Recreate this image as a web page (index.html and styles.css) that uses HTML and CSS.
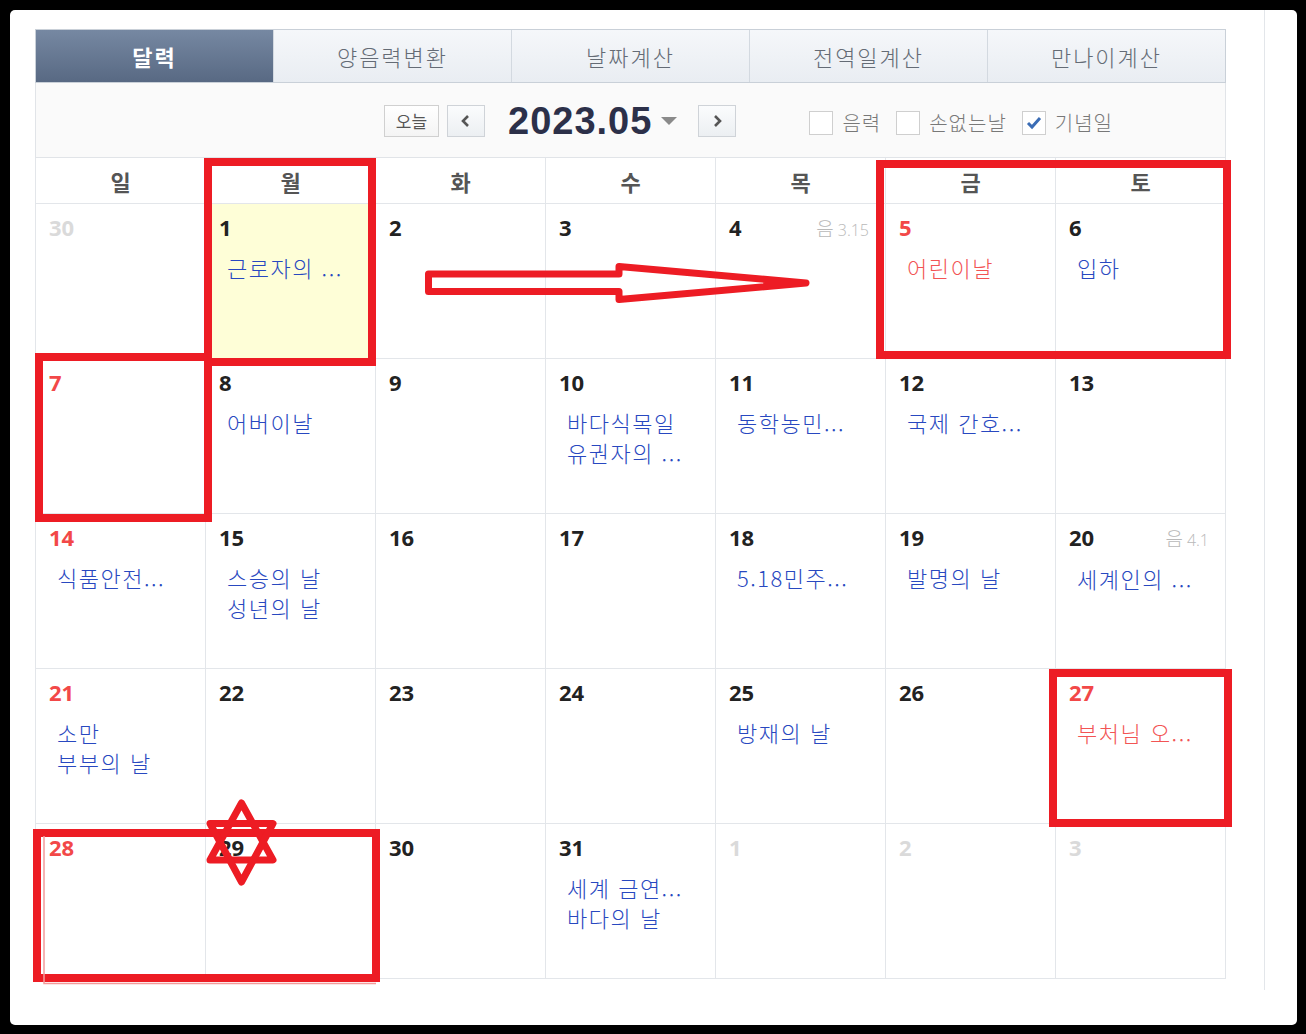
FILE: index.html
```html
<!DOCTYPE html>
<html lang="ko">
<head>
<meta charset="utf-8">
<title>달력</title>
<link rel="stylesheet" href="styles.css">
</head>
<body>
<div class="paper">
  <div class="page">
    <div class="cal">
      <div class="tabs">
        <div class="tab active">달력</div>
        <div class="tab">양음력변환</div>
        <div class="tab">날짜계산</div>
        <div class="tab">전역일계산</div>
        <div class="tab">만나이계산</div>
      </div>
      <div class="toolbar">
        <div class="btn-today">오늘</div>
        <div class="nav-btn prev"><svg width="12" height="14" viewBox="0 0 12 14"><polyline points="8,2 3,7 8,12" fill="none" stroke="#555" stroke-width="2.6"/></svg></div>
        <div class="title">2023.05</div>
        <div class="caret"></div>
        <div class="nav-btn next"><svg width="12" height="14" viewBox="0 0 12 14"><polyline points="4,2 9,7 4,12" fill="none" stroke="#555" stroke-width="2.6"/></svg></div>
        <div class="checks">
          <span class="cb"></span><span class="cb-label">음력</span>
          <span class="cb gap"></span><span class="cb-label">손없는날</span>
          <span class="cb gap checked"><svg width="16" height="14" viewBox="0 0 16 14"><polyline points="2,7 6,11 14,2" fill="none" stroke="#3a6cb5" stroke-width="3"/></svg></span><span class="cb-label">기념일</span>
        </div>
      </div>
      <div class="grid">
        <div class="dow">일</div><div class="dow">월</div><div class="dow">화</div><div class="dow">수</div><div class="dow">목</div><div class="dow">금</div><div class="dow">토</div>

        <div class="cell"><div class="top"><span class="num other">30</span></div></div>
        <div class="cell today"><div class="top"><span class="num">1</span></div><div class="evs"><div class="ev">근로자의 ...</div></div></div>
        <div class="cell"><div class="top"><span class="num">2</span></div></div>
        <div class="cell"><div class="top"><span class="num">3</span></div></div>
        <div class="cell"><div class="top"><span class="num">4</span><span class="lunar">음<span class="ld">3.15</span></span></div></div>
        <div class="cell"><div class="top"><span class="num red">5</span></div><div class="evs"><div class="ev red">어린이날</div></div></div>
        <div class="cell"><div class="top"><span class="num">6</span></div><div class="evs"><div class="ev">입하</div></div></div>

        <div class="cell"><div class="top"><span class="num red">7</span></div></div>
        <div class="cell"><div class="top"><span class="num">8</span></div><div class="evs"><div class="ev">어버이날</div></div></div>
        <div class="cell"><div class="top"><span class="num">9</span></div></div>
        <div class="cell"><div class="top"><span class="num">10</span></div><div class="evs"><div class="ev">바다식목일</div><div class="ev">유권자의 ...</div></div></div>
        <div class="cell"><div class="top"><span class="num">11</span></div><div class="evs"><div class="ev">동학농민...</div></div></div>
        <div class="cell"><div class="top"><span class="num">12</span></div><div class="evs"><div class="ev">국제 간호...</div></div></div>
        <div class="cell"><div class="top"><span class="num">13</span></div></div>

        <div class="cell"><div class="top"><span class="num red">14</span></div><div class="evs"><div class="ev">식품안전...</div></div></div>
        <div class="cell"><div class="top"><span class="num">15</span></div><div class="evs"><div class="ev">스승의 날</div><div class="ev">성년의 날</div></div></div>
        <div class="cell"><div class="top"><span class="num">16</span></div></div>
        <div class="cell"><div class="top"><span class="num">17</span></div></div>
        <div class="cell"><div class="top"><span class="num">18</span></div><div class="evs"><div class="ev">5.18민주...</div></div></div>
        <div class="cell"><div class="top"><span class="num">19</span></div><div class="evs"><div class="ev">발명의 날</div></div></div>
        <div class="cell"><div class="top"><span class="num">20</span><span class="lunar">음<span class="ld">4.1</span></span></div><div class="evs"><div class="ev">세계인의 ...</div></div></div>

        <div class="cell"><div class="top"><span class="num red">21</span></div><div class="evs"><div class="ev">소만</div><div class="ev">부부의 날</div></div></div>
        <div class="cell"><div class="top"><span class="num">22</span></div></div>
        <div class="cell"><div class="top"><span class="num">23</span></div></div>
        <div class="cell"><div class="top"><span class="num">24</span></div></div>
        <div class="cell"><div class="top"><span class="num">25</span></div><div class="evs"><div class="ev">방재의 날</div></div></div>
        <div class="cell"><div class="top"><span class="num">26</span></div></div>
        <div class="cell"><div class="top"><span class="num red">27</span></div><div class="evs"><div class="ev red">부처님 오...</div></div></div>

        <div class="cell"><div class="top"><span class="num red">28</span></div></div>
        <div class="cell"><div class="top"><span class="num">29</span></div></div>
        <div class="cell"><div class="top"><span class="num">30</span></div></div>
        <div class="cell"><div class="top"><span class="num">31</span></div><div class="evs"><div class="ev">세계 금연...</div><div class="ev">바다의 날</div></div></div>
        <div class="cell"><div class="top"><span class="num other">1</span></div></div>
        <div class="cell"><div class="top"><span class="num other">2</span></div></div>
        <div class="cell"><div class="top"><span class="num other">3</span></div></div>
      </div>
    </div>
  </div>
</div>
<svg class="marks" width="1306" height="1034" viewBox="0 0 1306 1034">
  <g fill="none" stroke="#ed1c24" stroke-width="8">
    <rect x="208" y="162" width="164" height="200"/>
    <rect x="39" y="357" width="169" height="161"/>
    <rect x="880" y="164" width="347" height="191"/>
    <rect x="1053" y="673" width="175" height="150"/>
    <rect x="37" y="833" width="339" height="145"/>
  </g>
  <polyline points="44,836 44,983.5 376,983.5" fill="none" stroke="#f49a9a" stroke-width="1.5"/>
  <g fill="none" stroke="#ed1c24" stroke-width="7" stroke-linejoin="round">
    <polygon points="428.5,274 619,274 619,266.5 806,283 619,299.5 619,291.5 428.5,291.5"/>
    <polygon points="241.5,803 273,860 210,860"/>
    <polygon points="241.5,882 273,823.5 210,823.5"/>
  </g>
</svg>
</body>
</html>
```

FILE: styles.css
```css
* { box-sizing: border-box; }
html, body { margin: 0; padding: 0; }
body {
  background: #000;
  width: 1306px;
  height: 1034px;
  position: relative;
  overflow: hidden;
  padding: 10px;
  font-family: "Noto Sans CJK KR", "Noto Sans", sans-serif;
}
.paper {
  width: 1287px;
  height: 1015px;
  background: #fff;
  border-radius: 5px;
}
.page {
  width: 1255px;
  height: 980px;
  border-right: 1px solid #e3e6ea;
  padding: 19px 0 0 25px;
}
.cal { width: 1191px; }

.tabs {
  display: flex;
  height: 54px;
  border: 1px solid #c9d0d8;
}
.tab {
  flex: 1;
  display: flex;
  align-items: center;
  justify-content: center;
  font-size: 22px;
  font-weight: 300;
  letter-spacing: 2px;
  line-height: 30px;
  color: #646b75;
  background: linear-gradient(#f5f7fa, #e9edf2);
  border-left: 1px solid #d3d9e0;
}
.tab:first-child { border-left: none; }
.tab.active {
  background: linear-gradient(#7688a2, #586983);
  color: #fff;
  font-weight: 700;
}

.toolbar {
  height: 75px;
  display: flex;
  align-items: center;
  background: #fafafa;
  border: 1px solid #e1e4e8;
  border-top: none;
  padding-left: 348px;
}
.btn-today {
  width: 55px;
  height: 32px;
  margin-top: 2px;
  border: 1px solid #d0d0d0;
  background: linear-gradient(#fff, #f4f4f4);
  font-size: 17px;
  line-height: 24px;
  color: #555;
  display: flex;
  align-items: center;
  justify-content: center;
}
.nav-btn {
  width: 38px;
  height: 32px;
  margin-top: 2px;
  border: 1px solid #cfd3d8;
  background: linear-gradient(#fbfcfd, #eceff2);
  display: flex;
  align-items: center;
  justify-content: center;
}
.nav-btn.prev { margin-left: 8px; }
.nav-btn.next { margin-left: 21px; }
.title {
  margin-left: 23px;
  margin-top: 2px;
  font-family: "Liberation Sans", Arial, sans-serif;
  font-weight: 700;
  font-size: 38px;
  letter-spacing: 1px;
  line-height: 44px;
  color: #2c3049;
}
.caret {
  margin-left: 9px;
  margin-top: 2px;
  width: 0;
  height: 0;
  border-left: 8px solid transparent;
  border-right: 8px solid transparent;
  border-top: 8px solid #8a8a8a;
}
.checks {
  margin-left: 73px;
  margin-top: 6px;
  display: flex;
  align-items: center;
}
.cb {
  width: 24px;
  height: 24px;
  border: 1px solid #cfcfcf;
  background: #fff;
  display: flex;
  align-items: center;
  justify-content: center;
}
.cb.gap { margin-left: 15px; }
.cb-label {
  margin-left: 9px;
  font-size: 20px;
  font-weight: 300;
  letter-spacing: 1px;
  line-height: 26px;
  color: #787878;
}

.grid {
  display: grid;
  grid-template-columns: repeat(7, 170px);
  border-left: 1px solid #e3e6ea;
  width: 1191px;
}
.dow {
  height: 46px;
  border-right: 1px solid #e3e6ea;
  border-bottom: 1px solid #e3e6ea;
  display: flex;
  align-items: center;
  justify-content: center;
  font-weight: 700;
  font-size: 22px;
  color: #555;
}
.cell {
  height: 155px;
  border-right: 1px solid #e3e6ea;
  border-bottom: 1px solid #e3e6ea;
  padding: 10px 16px 0 13px;
}
.cell.today { background: #fefed7; }
.top {
  display: flex;
  justify-content: space-between;
  align-items: baseline;
}
.num {
  font-family: "Open Sans", "Liberation Sans", sans-serif;
  font-weight: 700;
  font-size: 22px;
  line-height: 26px;
  color: #222;
}
.num.red { color: #f24848; }
.num.other { color: #dadada; }
.lunar {
  font-size: 19px;
  font-weight: 300;
  color: #b9b9b9;
}
.ld {
  margin-left: 4px;
  font-family: "Open Sans", sans-serif;
  font-size: 16px;
}
.evs { margin-top: 12px; padding-left: 8px; }
.ev {
  font-size: 22px;
  font-weight: 300;
  letter-spacing: 1.5px;
  line-height: 30px;
  color: #2848c0;
  white-space: nowrap;
}
.ev.red { color: #f25454; }

.marks {
  position: absolute;
  left: 0;
  top: 0;
  pointer-events: none;
}
```
